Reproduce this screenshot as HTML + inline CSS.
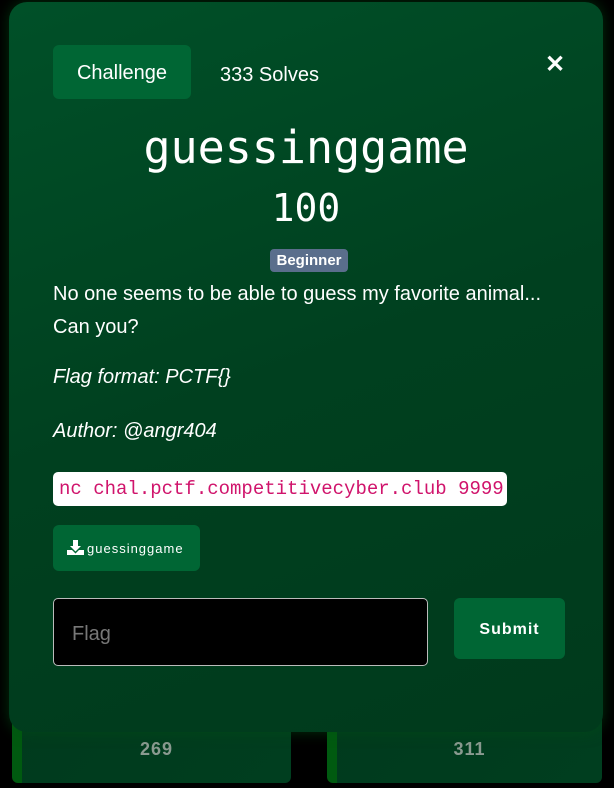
<!DOCTYPE html>
<html><head><style>
*{margin:0;padding:0;box-sizing:border-box}
body{width:614px;height:788px;background:#000;overflow:hidden;position:relative;font-family:"Liberation Sans",sans-serif;color:#fff}
.card{position:absolute;top:700px;height:83px;background:linear-gradient(135deg,#003a1d,#003e1f);border-left:10px solid #005a10;border-radius:6px;color:#8a9a90;font-weight:bold;font-size:18px;text-align:center;padding-top:39px;letter-spacing:1px}
.modal{position:absolute;left:9px;top:2px;width:594px;height:730px;border-radius:18px;background:linear-gradient(160deg,#005028 0%,#00401f 50%,#003a1c 100%);box-shadow:0 0 14px rgba(0,80,20,.6)}
.btn{position:absolute;background:#006634;border-radius:6px}
.mono{font-family:"DejaVu Sans Mono","Liberation Mono",monospace}
</style></head><body>
<div class="card" style="left:12px;width:279px">269</div>
<div class="card" style="left:327px;width:275px">311</div>
<div class="modal">
 <div class="btn" style="left:44px;top:43px;width:138px;height:54px;font-size:20px;line-height:56px;text-align:center">Challenge</div>
 <div style="position:absolute;left:211px;top:62px;font-size:20px">333 Solves</div>
 <div style="position:absolute;left:536px;top:48px;font-size:24px;font-weight:bold">✕</div>
 <div class="mono" style="position:absolute;left:0;width:594px;text-align:center;top:120px;font-size:45px;line-height:52px">guessinggame</div>
 <div class="mono" style="position:absolute;left:0;width:594px;text-align:center;top:184px;font-size:38px;line-height:44px">100</div>
 <div style="position:absolute;left:261px;top:247px;width:78px;height:23px;background:#5a6e8c;border-radius:4px;font-size:15px;font-weight:bold;text-align:center;line-height:23px">Beginner</div>
 <div style="position:absolute;left:44px;top:276px;font-size:20px;line-height:33px;width:530px">No one seems to be able to guess my favorite animal...<br>Can you?</div>
 <div style="position:absolute;left:44px;top:364px;font-size:20px;font-style:italic">Flag format: PCTF{}</div>
 <div style="position:absolute;left:44px;top:418px;font-size:20px;font-style:italic">Author: @angr404</div>
 <div style="position:absolute;left:44px;top:470px;width:454px;height:34px;background:#fff;border-radius:5px;color:#d0146c;font-size:19px;line-height:34px;padding-left:6px;white-space:nowrap;font-family:'Liberation Mono',monospace">nc chal.pctf.competitivecyber.club 9999</div>
 <div class="btn" style="left:44px;top:523px;width:147px;height:46px;font-size:13px;line-height:48px;padding-left:14px;letter-spacing:1px"><svg width="17" height="15" viewBox="0 0 17 15" style="vertical-align:-2px;margin-right:3px"><path d="M6 0h5v6h3l-5.5 5.5L3 6h3z" fill="#fff"/><path d="M0 10h5l3.5 3.5L12 10h5v5H0z" fill="#fff"/></svg>guessinggame</div>
 <div style="position:absolute;left:44px;top:596px;width:375px;height:68px;background:#000;border:1px solid #bbb;border-radius:5px;color:#777;font-size:20px;line-height:70px;padding-left:18px">Flag</div>
 <div class="btn" style="left:445px;top:596px;width:111px;height:61px;font-size:16px;font-weight:bold;text-align:center;line-height:63px;letter-spacing:1px">Submit</div>
</div>
</body></html>
